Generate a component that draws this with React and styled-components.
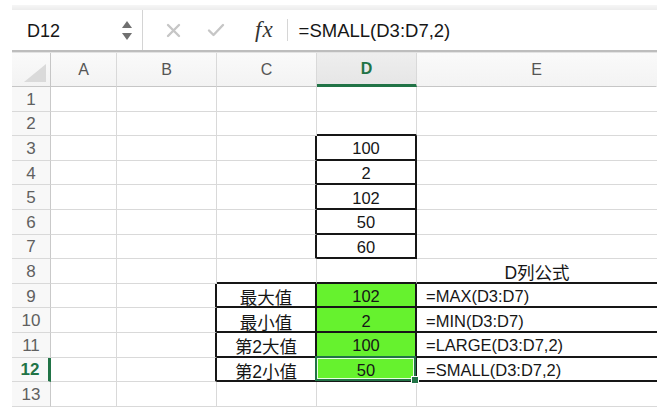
import React from "react";
import styled, { createGlobalStyle, css } from "styled-components";

const GREEN = "#217346";
const GRID = "#d9d9d9";
const INK = "#161616";

const GlobalStyle = createGlobalStyle`
  html, body {
    margin: 0;
    background: #fff;
  }
  body {
    font-family: "Liberation Sans", "Noto Sans CJK SC", Arial, sans-serif;
    color: ${INK};
  }
`;

const Frame = styled.div`
  width: 668px;
  height: 415px;
  box-sizing: border-box;
  padding: 5px 11px 0 12px;
  overflow: hidden;
`;

const TopStrip = styled.div`
  height: 5px;
  background: linear-gradient(#f6f6f6, #ececec);
`;

const FormulaBar = styled.div`
  display: flex;
  align-items: stretch;
  height: 40px;
  border-bottom: 2px solid #bdbdbd;
  box-shadow: 0 1px 0 #e2e2e2;
  margin-bottom: 1px;
  background: #fff;
`;

const NameBox = styled.div`
  width: 131px;
  box-sizing: border-box;
  display: flex;
  align-items: center;
  justify-content: space-between;
  padding: 2px 10px 0 15px;
  border-right: 1px solid #d4d4d4;
  font-size: 18px;
`;

const Spinner = styled.div`
  display: flex;
  flex-direction: column;
  gap: 5px;
  margin-top: -2px;
`;

const Tools = styled.div`
  display: flex;
  align-items: center;
  padding-left: 21px;
  gap: 25px;
`;

const ToolIcon = styled.span`
  display: flex;
  align-items: center;
  justify-content: center;
  width: 18px;
`;

const Fx = styled.span`
  font-family: "Liberation Serif", serif;
  font-style: italic;
  font-size: 23px;
  color: #333;
  margin-left: 5px;
  letter-spacing: 1px;
`;

const Divider = styled.span`
  width: 1px;
  height: 22px;
  background: #d6d6d6;
  align-self: center;
  margin-left: 13px;
`;

const Formula = styled.div`
  display: flex;
  align-items: center;
  padding: 2px 0 0 11px;
  font-size: 18.5px;
`;

const Sheet = styled.div`
  display: grid;
  grid-template-columns: 39px 66px 100px 100px 100px 240px;
  grid-template-rows: 34px repeat(13, 24.6px);
`;

const HeadCell = styled.div`
  box-sizing: border-box;
  display: flex;
  align-items: center;
  justify-content: center;
  background: ${(p) => (p.$active ? "linear-gradient(#eeeeee, #e6e6e6)" : "linear-gradient(#fafafa, #f3f3f3)")};
  border-right: 1px solid ${(p) => (p.$last ? "transparent" : GRID)};
  border-bottom: ${(p) => (p.$active ? `3px solid ${GREEN}` : "1px solid #c6c6c6")};
  font-size: 16px;
  color: #555;
  ${(p) =>
    p.$active &&
    css`
      color: ${GREEN};
      font-weight: bold;
    `}
`;

const Corner = styled(HeadCell)`
  align-items: flex-end;
  justify-content: flex-end;
  padding: 0 4px 4px 0;
  border-right-color: #c6c6c6;
`;

const RowHead = styled.div`
  box-sizing: border-box;
  display: flex;
  align-items: center;
  justify-content: center;
  padding-top: 2px;
  background: #f8f8f8;
  border-bottom: 1px solid ${GRID};
  border-right: ${(p) => (p.$active ? `3px solid ${GREEN}` : "1px solid #c9c9c9")};
  font-size: 17px;
  color: ${(p) => (p.$active ? GREEN : "#606060")};
  font-weight: ${(p) => (p.$active ? "bold" : "normal")};
`;

const Cell = styled.div`
  position: relative;
  box-sizing: border-box;
  display: flex;
  align-items: center;
  justify-content: ${(p) => (p.$left ? "flex-start" : "center")};
  padding: 3px 0 0 ${(p) => (p.$left ? "9px" : "0")};
  background: ${(p) => (p.$fill ? "#66f22e" : "#fff")};
  border-right: ${(p) => (p.$noRight ? "none" : p.$blackRight ? `2px solid ${INK}` : `1px solid ${GRID}`)};
  border-bottom: ${(p) => (p.$blackBottom ? `2px solid ${INK}` : `1px solid ${GRID}`)};
  font-size: ${(p) => (p.$cjk ? "17.5px" : "16.5px")};
  white-space: nowrap;
`;

const Selection = styled.div`
  position: absolute;
  z-index: 3;
  inset: -2px -1px -1px -2px;
  border: 2px solid ${GREEN};
  box-shadow: inset 0 0 0 1px #e9ffe0;
  pointer-events: none;

  &::after {
    content: "";
    position: absolute;
    right: -5px;
    bottom: -5px;
    width: 6px;
    height: 6px;
    background: ${GREEN};
    border: 1px solid #fff;
  }
`;

const COLS = ["A", "B", "C", "D", "E"];

const DATA = {
  D3: "100",
  D4: "2",
  D5: "102",
  D6: "50",
  D7: "60",
  E8: "D列公式",
  C9: "最大值",
  C10: "最小值",
  C11: "第2大值",
  C12: "第2小值",
  D9: "102",
  D10: "2",
  D11: "100",
  D12: "50",
  E9: "=MAX(D3:D7)",
  E10: "=MIN(D3:D7)",
  E11: "=LARGE(D3:D7,2)",
  E12: "=SMALL(D3:D7,2)",
};

const BOXED = new Set([
  "D3", "D4", "D5", "D6", "D7",
  "C9", "C10", "C11", "C12",
  "D9", "D10", "D11", "D12",
  "E9", "E10", "E11", "E12",
]);

const FILLED = new Set(["D9", "D10", "D11", "D12"]);
const SELECTED = "D12";

const boxed = (col, row) => BOXED.has(`${col}${row}`);

const Triangle = () => (
  <svg width="22" height="18" viewBox="0 0 22 18">
    <polygon points="22,0 22,18 0,18" fill="#dadada" />
  </svg>
);

const Arrow = ({ down }) => (
  <svg width="10" height="7" viewBox="0 0 10 7">
    <polygon points={down ? "0,0 10,0 5,7" : "5,0 10,7 0,7"} fill="#707070" />
  </svg>
);

const CrossIcon = () => (
  <svg width="15" height="15" viewBox="0 0 15 15">
    <path d="M2 2 L13 13 M13 2 L2 13" stroke="#c6c6c6" strokeWidth="2.4" strokeLinecap="round" />
  </svg>
);

const CheckIcon = () => (
  <svg width="18" height="14" viewBox="0 0 18 14">
    <path d="M2 7.5 L6.5 12 L16 2" stroke="#c6c6c6" strokeWidth="2.4" fill="none" strokeLinecap="round" strokeLinejoin="round" />
  </svg>
);

const App = () => {
  const rows = Array.from({ length: 13 }, (_, i) => i + 1);
  const selRow = 12;
  const selCol = "D";

  return (
    <>
      <GlobalStyle />
      <Frame>
        <TopStrip />
        <FormulaBar>
          <NameBox>
            D12
            <Spinner>
              <Arrow />
              <Arrow down />
            </Spinner>
          </NameBox>
          <Tools>
            <ToolIcon>
              <CrossIcon />
            </ToolIcon>
            <ToolIcon>
              <CheckIcon />
            </ToolIcon>
            <Fx>fx</Fx>
          </Tools>
          <Divider />
          <Formula>=SMALL(D3:D7,2)</Formula>
        </FormulaBar>

        <Sheet>
          <Corner>
            <Triangle />
          </Corner>
          {COLS.map((c) => (
            <HeadCell key={c} $active={c === selCol} $last={c === "E"}>
              {c}
            </HeadCell>
          ))}

          {rows.map((r) => (
            <React.Fragment key={r}>
              <RowHead $active={r === selRow}>{r}</RowHead>
              {COLS.map((c, ci) => {
                const id = `${c}${r}`;
                const next = COLS[ci + 1];
                const text = DATA[id];
                return (
                  <Cell
                    key={id}
                    $left={c === "E" && r >= 9}
                    $cjk={c === "C" || id === "E8"}
                    $fill={FILLED.has(id)}
                    $noRight={c === "E"}
                    $blackRight={boxed(c, r) || (next && boxed(next, r))}
                    $blackBottom={boxed(c, r) || boxed(c, r + 1)}
                  >
                    {text}
                    {id === SELECTED && <Selection />}
                  </Cell>
                );
              })}
            </React.Fragment>
          ))}
        </Sheet>
      </Frame>
    </>
  );
};

export default App;
